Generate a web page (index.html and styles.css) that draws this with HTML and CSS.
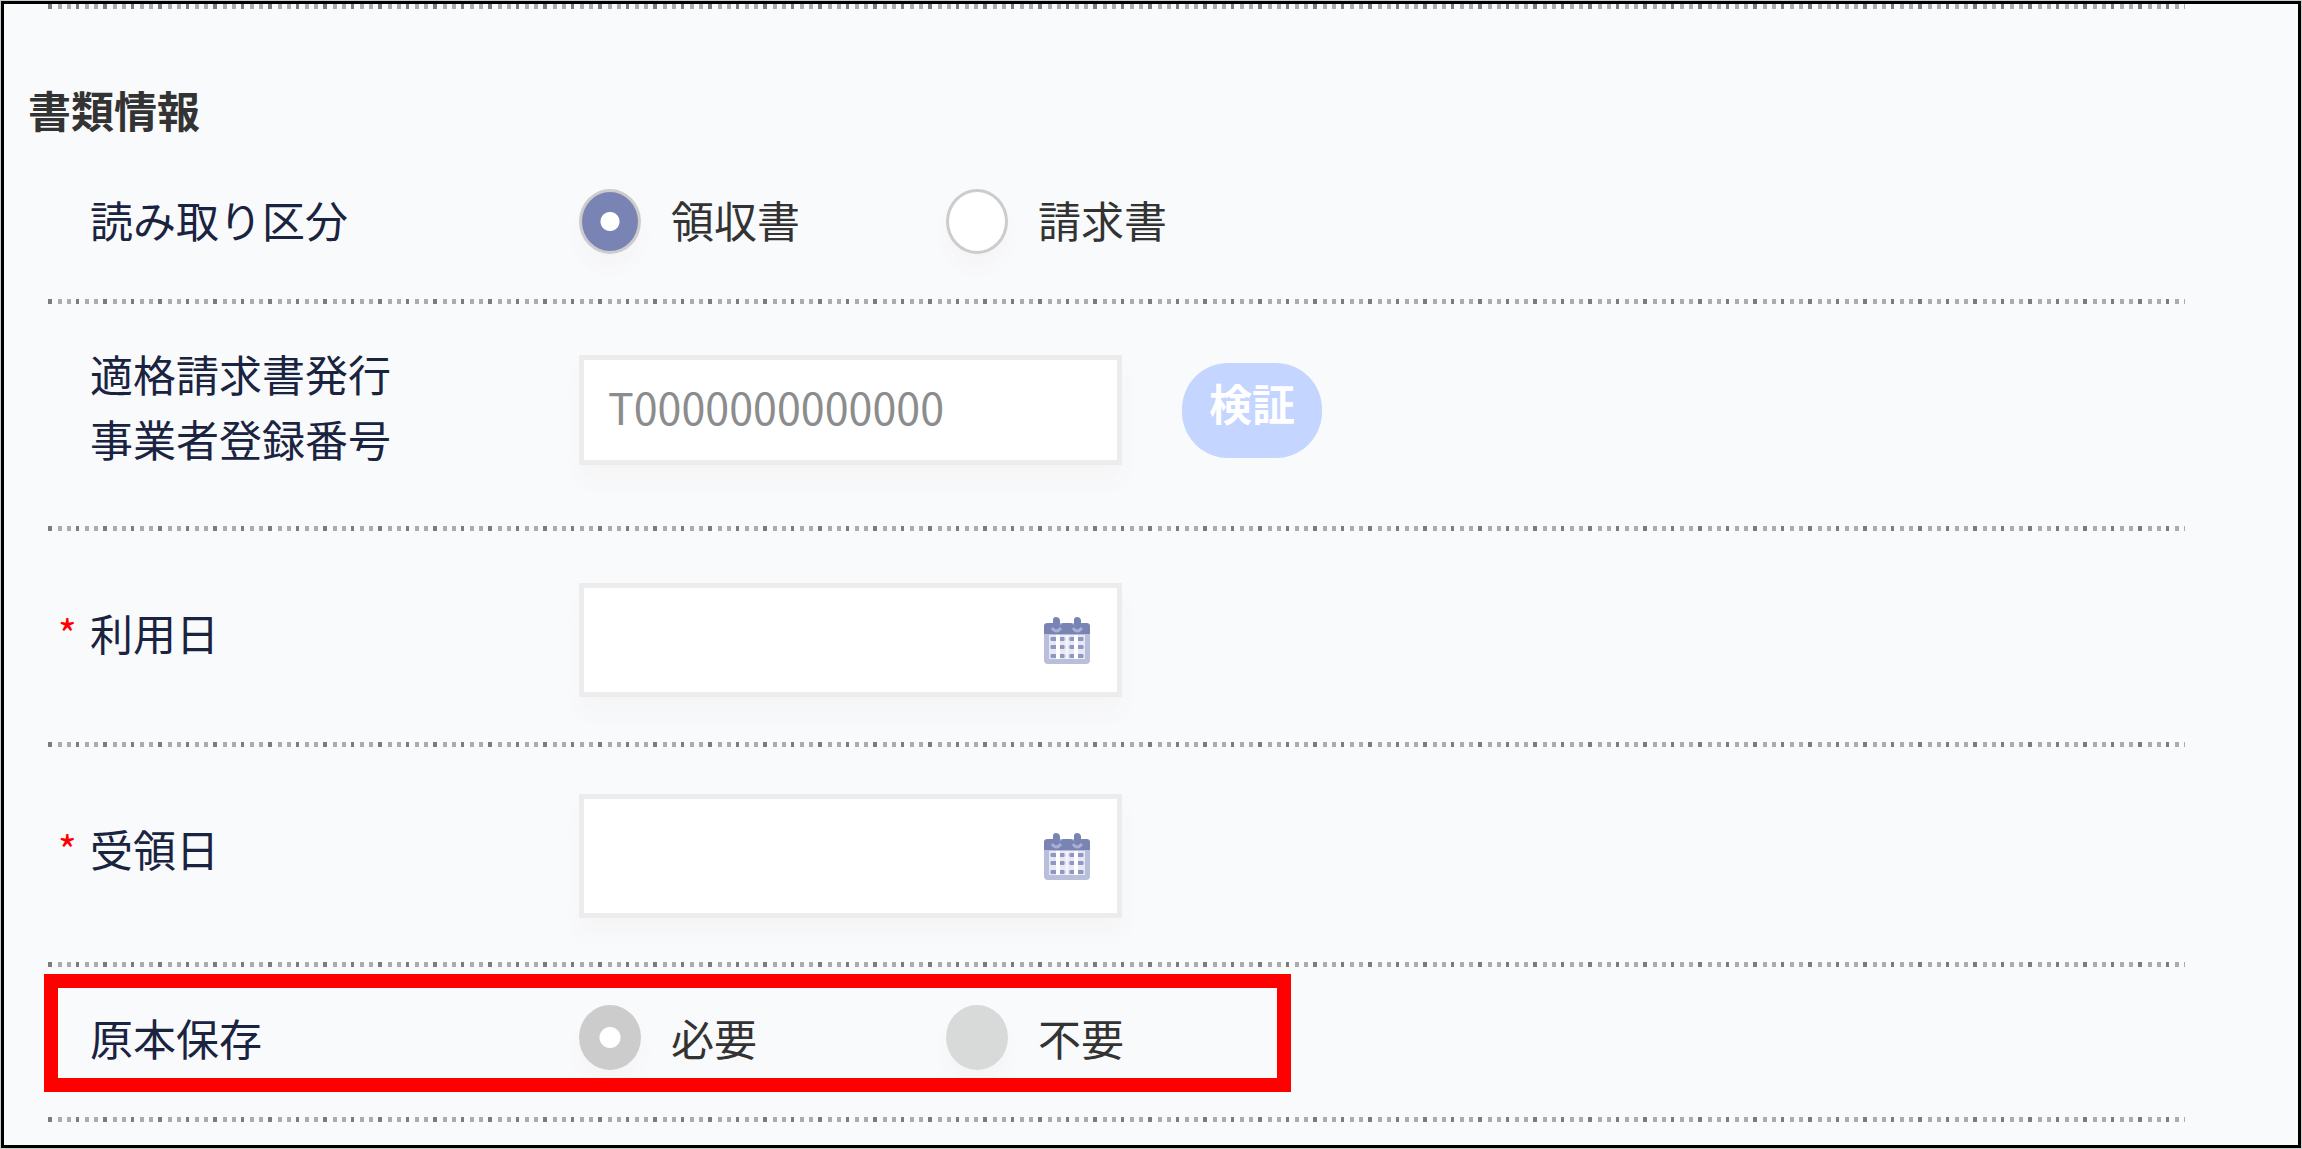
FILE: index.html
```html
<!DOCTYPE html>
<html lang="ja">
<head>
<meta charset="utf-8">
<meta name="viewport" content="width=device-width, initial-scale=1">
<title>書類情報</title>
<link rel="stylesheet" href="styles.css">
</head>
<body>
<svg width="0" height="0" class="sprite" aria-hidden="true">
  <symbol id="calendar" viewBox="0 0 47 47">
    <rect x="1" y="6" width="46" height="41" rx="4" fill="#b9bedb"/>
    <path d="M1 17V9q0-3 4-3h5V3q0-3 3-3t4 3v5l3-2h8l3 2V3q0-3 3-3t4 3v3h5q4 0 4 3v8z" fill="#7a84b4"/>
    <path d="M9 11q4 6 9 0M30 11q4 6 9 0" fill="none" stroke="#a9b0d3" stroke-width="3"/>
    <rect x="6" y="18" width="36" height="24" fill="#e6e8f3"/>
    <path d="M7 22h34M7 30h34M7 39h34" stroke="#b9bedb" stroke-width="3"/>
    <path d="M15 18v24M33 18v24" stroke="#fff" stroke-width="4"/>
    <path d="M24 18v24" stroke="#f4f5fb" stroke-width="3"/>
    <path d="M8 22h5M17 22h4M27 22h4M35 22h5M8 30h5M17 30h4M27 30h4M35 30h5M8 39h5M17 39h4M27 39h4M35 39h5" stroke="#8f97c2" stroke-width="4"/>
  </symbol>
</svg>
<main class="frame">
  <form class="sheet">
    <h2 class="title">書類情報</h2>

    <div class="row row-kind" role="radiogroup" aria-labelledby="kind-label">
      <span class="label" id="kind-label">読み取り区分</span>
      <div class="options">
        <label class="option"><input class="radio" type="radio" name="kind" checked><span class="option-text">領収書</span></label>
        <label class="option"><input class="radio" type="radio" name="kind"><span class="option-text">請求書</span></label>
      </div>
    </div>

    <div class="row row-number">
      <label class="label" for="number">適格請求書発行<br>事業者登録番号</label>
      <div class="controls">
        <input class="field" id="number" type="text" placeholder="T0000000000000">
        <button class="verify" type="button">検証</button>
      </div>
    </div>

    <div class="row row-used">
      <span class="required">*</span>
      <label class="label" for="used">利用日</label>
      <div class="field date">
        <input class="date-input" id="used" type="text">
        <button class="picker" type="button" aria-label="カレンダー"><svg class="icon"><use href="#calendar"/></svg></button>
      </div>
    </div>

    <div class="row row-received">
      <span class="required">*</span>
      <label class="label" for="received">受領日</label>
      <div class="field date date-tall">
        <input class="date-input" id="received" type="text">
        <button class="picker" type="button" aria-label="カレンダー"><svg class="icon"><use href="#calendar"/></svg></button>
      </div>
    </div>

    <div class="row row-original" role="radiogroup" aria-labelledby="original-label">
      <span class="label" id="original-label">原本保存</span>
      <div class="options">
        <label class="option"><input class="radio" type="radio" name="original" checked disabled>必要</label>
        <label class="option"><input class="radio" type="radio" name="original" disabled>不要</label>
      </div>
      <div class="highlight"></div>
    </div>
  </form>
</main>
</body>
</html>
```
FILE: styles.css
```css
* {
  box-sizing: border-box;
}

body {
  margin: 0;
  background: #c9d0cb;
  color: #333;
  font-family: "Noto Sans CJK JP", "Noto Sans", sans-serif;
  font-size: 43px;
  line-height: 65px;
}

input,
button {
  margin: 0;
  font: inherit;
}

.sprite {
  position: absolute;
}

.frame {
  min-height: calc(100vh - 2px);
  margin: 1px;
  padding: 0 113px 0 44px;
  border: 3px solid #000;
  background: #f9fafc;
}

/* Dotted rule: one dark dot followed by two light ones */
.sheet::before,
.row::after {
  content: "";
  display: block;
  height: 5px;
  background: repeating-linear-gradient(90deg,
    #7c7c7e 0 4px, transparent 4px 10px,
    #acacae 10px 14px, transparent 14px 19px,
    #acacae 19px 23px, transparent 23px 28px,
    #7c7c7e 28px 31px, transparent 31px 37px,
    #acacae 37px 41px, transparent 41px 46px,
    #acacae 46px 50px, transparent 50px 55px);
}

.title {
  margin: 68px 0 0 -20px;
  font-size: 43px;
  font-weight: 700;
}

.row {
  position: relative;
  display: grid;
  grid-template-columns: 42px 489px 1fr;
  align-items: center;
}

.row::after {
  grid-column: 1 / -1;
}

.row-kind {
  padding-top: 45px;
  row-gap: 43px;
}

.row-number {
  padding-top: 37px;
  row-gap: 47px;
}

.row-used {
  padding-top: 52px;
  row-gap: 45px;
}

.row-received {
  padding-top: 47px;
  row-gap: 44px;
}

.row-original {
  padding-top: 38px;
  row-gap: 47px;
}

.label {
  grid-column: 2;
  color: #1a2340;
}

.row-kind .label,
.option-text {
  padding-bottom: 4px;
}

.row-number .label {
  padding-bottom: 8px;
}

.row-used .label,
.row-received .label {
  padding-bottom: 16px;
}

.required {
  grid-column: 1;
  padding: 0 0 14px 10px;
  color: #f00;
  font-size: 40px;
}

.options {
  display: grid;
  grid-template-columns: 367px 367px;
}

.option {
  display: flex;
  align-items: center;
  gap: 30px;
}

.radio {
  appearance: none;
  flex: none;
  width: 62px;
  height: 65px;
  border: 3px solid #ccc;
  border-radius: 50%;
  background: #fff;
  box-shadow: 0 14px 18px rgba(120, 90, 60, 0.03);
}

.radio:checked {
  background: radial-gradient(circle, #fff 9px, #7a84b4 10px);
}

.radio:disabled {
  border-color: #d8d9d9;
  background: #d8d9d9;
}

.radio:disabled:checked {
  border-color: #ccc;
  background: radial-gradient(circle, #fff 10px, #ccc 11px);
}

.controls {
  display: flex;
  align-items: center;
  gap: 60px;
}

.field {
  width: 543px;
  height: 110px;
  padding: 0 24px 8px;
  border: 5px solid #ececec;
  border-radius: 0;
  background: #fff;
  color: #333;
  box-shadow: 0 16px 20px rgba(120, 90, 60, 0.03);
}

.field::placeholder {
  color: #8c8c8c;
  opacity: 1;
}

.verify {
  width: 140px;
  height: 95px;
  padding: 0 0 16px;
  border: 0;
  border-radius: 46px;
  background: #c4d5ff;
  color: #fff;
  font-weight: 700;
}

.date {
  display: flex;
  align-items: center;
  height: 114px;
  padding: 0 27px 0 24px;
}

.date-tall {
  height: 124px;
}

.date-input {
  flex: 1;
  min-width: 0;
  padding: 0;
  border: 0;
  background: none;
}

.picker {
  padding: 0;
  border: 0;
  background: none;
}

.icon {
  display: block;
  width: 47px;
  height: 47px;
}

/* Callout drawn over the last row */
.highlight {
  position: absolute;
  top: 7px;
  left: -4px;
  width: 1247px;
  height: 118px;
  border: 14px solid #f00;
  pointer-events: none;
}
```
